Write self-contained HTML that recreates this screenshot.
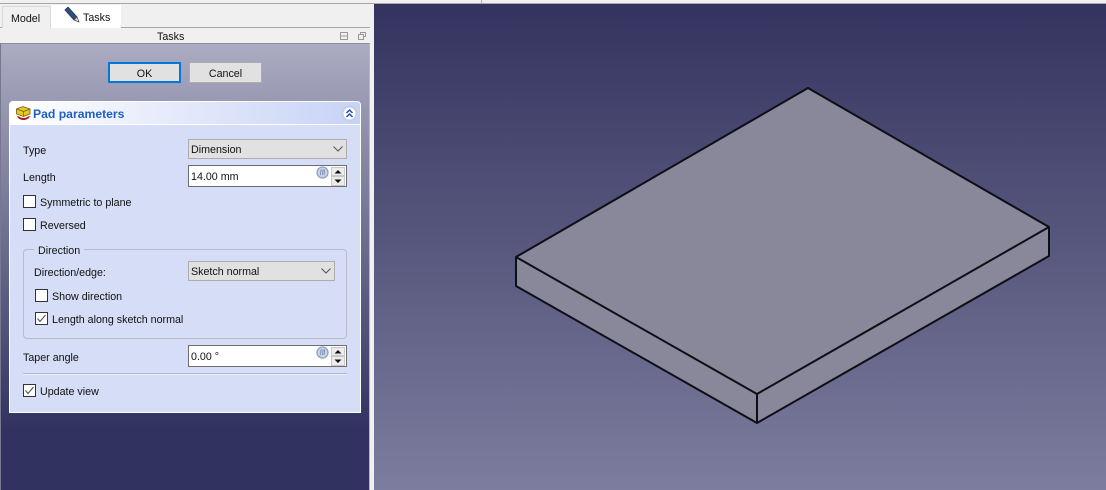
<!DOCTYPE html>
<html><head><meta charset="utf-8"><style>
html,body{margin:0;padding:0;background:#f0f0f0}
#r{position:relative;width:1106px;height:490px;overflow:hidden;background:#f0f0f0;font:10.7px "Liberation Sans",sans-serif;color:#111}
#r div,#r svg{position:absolute;box-sizing:border-box}
.t{white-space:nowrap;line-height:14px;height:14px;margin-top:1px}
.cb{width:13px;height:13px;background:#fff;border:1px solid #333}
.combo{background:#e1e1e1;border:1px solid #adadad;height:20px;line-height:20px;padding-left:2px}
.inp{background:#fff;border:1px solid #6e6e6e;height:22px;width:159px;line-height:22px;padding-left:2px}
.spin{background:#ececec;border:1px solid #c8c8c8;width:14px;height:9px}
</style></head><body><div id="r">
<div style="left:0;top:3px;width:1106px;height:1px;background:#a8a8a8"></div>
<div style="left:481px;top:0;width:1px;height:3px;background:#b0b0b0"></div>
<div style="left:0;top:27px;width:370px;height:1px;background:#a8a8a8"></div>
<div style="left:2px;top:6px;width:49px;height:22px;background:#f0f0f0;border:1px solid #d9d9d9;border-bottom:none"></div>
<div class="t" style="left:11px;top:11px">Model</div>
<div style="left:51px;top:5px;width:70px;height:23px;background:#fff"></div>
<svg style="left:64px;top:7px" width="17" height="16" viewBox="0 0 17 16"><path d="M1 3 4 0 13 10 10 13Z" fill="#2f4f7f" stroke="#1d3557" stroke-width=".8"/><path d="M10 13 13 10 15 15Z" fill="#ddd" stroke="#444" stroke-width=".7"/></svg>
<div class="t" style="left:83px;top:10px">Tasks</div>
<div class="t" style="left:157px;top:29px">Tasks</div>
<svg style="left:339px;top:31px" width="30" height="10" viewBox="0 0 30 10" fill="none" stroke="#9a9a9a"><path d="M1.500 1.500h7v7h-7zM1.500 5h7"/><path d="M21.500 3.500v-2h5v4h-2M19.500 3.500h5v5h-5z"/></svg>

<div style="left:0;top:43px;width:370px;height:447px;background:linear-gradient(#ababc2 0,#323260 385px);border-left:1px solid #77778f;border-top:1px solid #8b8ba3;border-right:1px solid #b8b8b8"></div>

<div style="left:108px;top:62px;width:73px;height:21px;background:#e1e1e1;border:2px solid #0078d7"></div>
<div class="t" style="left:108px;top:66px;width:73px;text-align:center">OK</div>
<div style="left:189px;top:62px;width:73px;height:21px;background:#e1e1e1;border:1px solid #adadad"></div>
<div class="t" style="left:189px;top:66px;width:73px;text-align:center">Cancel</div>

<div style="left:9px;top:101px;width:352px;height:312px;background:#d6ddf6;border:1px solid #fff;border-radius:4px 4px 0 0"></div>
<div style="left:10px;top:102px;width:350px;height:23px;background:linear-gradient(90deg,#fff,#c7d3f6);border-bottom:1px solid #fff;border-radius:3px 3px 0 0"></div>
<svg style="left:15px;top:105px" width="17" height="17" viewBox="0 0 17 17"><path d="M1.500 4 8 1.500 15 4v5L8.500 11.500 1.500 9Z" fill="#e8c820" stroke="#6b5a10" stroke-width=".8"/><path d="M1.500 4 8.500 6.500 15 4M8.500 6.500v5" fill="none" stroke="#6b5a10" stroke-width=".7"/><path d="M2 11c1 3 4 4 6.500 4S14 14 15 11l-2 .5c-1 1.200-3 1.500-4.500 1.500S5 12.500 4 11.500Z" fill="#a81c1c"/></svg>
<div class="t" style="left:33px;top:106px;color:#1f5fc4;font-weight:bold;font-size:12.200px">Pad parameters</div>
<svg style="left:341px;top:105px" width="17" height="17" viewBox="0 0 17 17"><circle cx="8.500" cy="8.500" r="7" fill="#fff" stroke="#c5cde8" stroke-width="2"/><path d="M5.500 8 8.500 5l3 3M5.500 12l3-3 3 3" fill="none" stroke="#1f4fb0" stroke-width="1.500"/></svg>

<div class="t" style="left:23px;top:143px">Type</div>
<div class="combo" style="left:188px;top:139px;width:159px">Dimension</div>
<svg style="left:333px;top:146px" width="10" height="6" viewBox="0 0 10 6"><path d="M.5.500 5 5 9.500.500" fill="none" stroke="#555"/></svg>

<div class="t" style="left:23px;top:170px">Length</div>
<div class="inp" style="left:188px;top:165px">14.00 mm</div>
<svg style="left:316px;top:166px" width="13" height="13" viewBox="0 0 13 13"><circle cx="6.500" cy="6.500" r="5.500" fill="#c9d3e6" stroke="#8fa5c0" stroke-width="1.300"/><path d="M4.500 9 5 4h1M6.500 9 7 4h1.500L8 9" fill="none" stroke="#6f88a8" stroke-width=".8"/></svg>
<div class="spin" style="left:331px;top:167px"></div><div class="spin" style="left:331px;top:176px;height:10px"></div>
<svg style="left:334px;top:170px" width="8" height="14" viewBox="0 0 8 14"><path d="M4 0 7.500 3.500H.500ZM.500 9.500h7L4 13Z" fill="#111"/></svg>

<div class="cb" style="left:23px;top:195px"></div>
<div class="t" style="left:40px;top:195px">Symmetric to plane</div>
<div class="cb" style="left:23px;top:218px"></div>
<div class="t" style="left:40px;top:218px">Reversed</div>

<div style="left:23px;top:249px;width:324px;height:90px;border:1px solid #b9bcc8;border-radius:4px"></div>
<div class="t" style="left:34px;top:243px;background:#d6ddf6;padding:0 4px">Direction</div>

<div class="t" style="left:34px;top:265px">Direction/edge:</div>
<div class="combo" style="left:188px;top:261px;width:147px">Sketch normal</div>
<svg style="left:321px;top:268px" width="10" height="6" viewBox="0 0 10 6"><path d="M.5.500 5 5 9.500.500" fill="none" stroke="#555"/></svg>

<div class="cb" style="left:35px;top:289px"></div>
<div class="t" style="left:52px;top:289px">Show direction</div>
<div class="cb" style="left:35px;top:312px"></div>
<svg style="left:35px;top:312px" width="13" height="13" viewBox="0 0 13 13"><path d="M2.500 6.500 5 9.500 10.500 3" fill="none" stroke="#555" stroke-width="1.100"/></svg>
<div class="t" style="left:52px;top:312px">Length along sketch normal</div>

<div class="t" style="left:23px;top:350px">Taper angle</div>
<div class="inp" style="left:188px;top:345px">0.00 °</div>
<svg style="left:316px;top:346px" width="13" height="13" viewBox="0 0 13 13"><circle cx="6.500" cy="6.500" r="5.500" fill="#c9d3e6" stroke="#8fa5c0" stroke-width="1.300"/><path d="M4.500 9 5 4h1M6.500 9 7 4h1.500L8 9" fill="none" stroke="#6f88a8" stroke-width=".8"/></svg>
<div class="spin" style="left:331px;top:347px"></div><div class="spin" style="left:331px;top:356px;height:10px"></div>
<svg style="left:334px;top:350px" width="8" height="14" viewBox="0 0 8 14"><path d="M4 0 7.500 3.500H.500ZM.500 9.500h7L4 13Z" fill="#111"/></svg>

<div style="left:23px;top:373px;width:324px;height:2px;background:#b4b6c4;border-bottom:1px solid #eef0fb"></div>

<div class="cb" style="left:23px;top:384px"></div>
<svg style="left:23px;top:384px" width="13" height="13" viewBox="0 0 13 13"><path d="M2.500 6.500 5 9.500 10.500 3" fill="none" stroke="#555" stroke-width="1.100"/></svg>
<div class="t" style="left:40px;top:384px">Update view</div>

<div style="left:374px;top:4px;width:732px;height:486px;background:linear-gradient(#33335f,#7d7d9e)"></div>
<svg style="left:0;top:0" width="1106" height="490" viewBox="0 0 1106 490">
<path d="M808 88 1049 227V256L757 423 516 286V257Z" fill="#88889a"/>
<path d="M808 88 1049 227 757 394 516 257ZM516 257V286L757 423 1049 256V227M757 394V423" fill="none" stroke="#0e0e16" stroke-width="2" stroke-linejoin="round"/>
</svg>
</div></body></html>
